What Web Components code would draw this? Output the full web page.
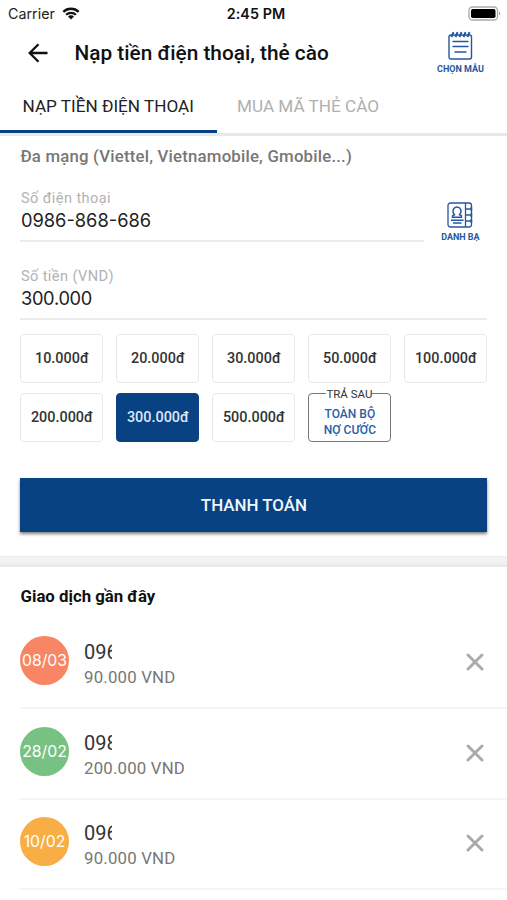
<!DOCTYPE html>
<html lang="vi">
<head>
<meta charset="utf-8">
<meta name="viewport" content="width=device-width, initial-scale=1">
<title>Nạp tiền điện thoại, thẻ cào</title>
<style>
   body {
      margin: 0;
      background: #fff;
      font-family: Roboto, 'Liberation Sans', sans-serif;
      color: #111;
      --blue: #084283;
      --line: #ececec;
      --ui: Inter, 'Liberation Sans', sans-serif;
   }
</style>
</head>
<body>
<topup-screen></topup-screen>

<script>
// Small base class, every element only brings its own markup
class BaseElement extends HTMLElement {
   constructor() {
      super()
      this.attachShadow({ mode: 'open' })
      const template = document.createElement('template')
      template.innerHTML = `<style>*{box-sizing:border-box}</style>` + this.constructor.markup
      this.shadowRoot.appendChild(template.content.cloneNode(true))
   }
}

class StatusBar extends BaseElement {
   static markup = `
   <style>
      :host {
         display: grid;
         grid-template-columns: 1fr auto 1fr;
         align-items: center;
         height: 27px;
         padding: 0 6px 0 8px;
         font: 400 14.3px/27px var(--ui);
         color: #222;
      }
      .left { display: flex; align-items: center; gap: 7px; }
      .time { font-weight: 600; letter-spacing: 0.1px; color: #111; padding-left: 3px; }
      .battery { justify-self: end; }
      svg { display: block; }
   </style>
   <div class="left">
      <span>Carrier</span>
      <svg width="18" height="13" viewBox="0 0 18 13" fill="none" stroke="#111" stroke-width="2.3">
         <path d="M1.3 4.9a11 11 0 0 1 15.4 0M4.1 7.8a7 7 0 0 1 9.8 0"/>
         <path d="M9 12.4 6 9.6a4.2 4.2 0 0 1 6 0z" fill="#111" stroke="none"/>
      </svg>
   </div>
   <span class="time">2:45 PM</span>
   <svg class="battery" width="33" height="15" viewBox="0 0 33 15">
      <rect x="1" y="1" width="28.5" height="13" rx="3.5" fill="#fff" stroke="#aaa" stroke-width="1.3"/>
      <rect x="3" y="3" width="24.5" height="9" rx="1.8" fill="#000"/>
      <path d="M31 5.5c1.3.5 1.3 3.5 0 4z" fill="#888"/>
   </svg>`
}

class IconAction extends BaseElement {
   static markup = `
   <style>
      :host {
         display: flex;
         flex-direction: column;
         align-items: center;
         width: 54px;
         color: #2557a0;
         font-size: 9px;
         line-height: 11px;
         font-weight: 700;
         white-space: nowrap;
      }
      .label { margin-top: 4px; }
   </style>
   <slot name="icon"></slot>
   <span class="label"><slot></slot></span>`
}

class PageHeader extends BaseElement {
   static markup = `
   <style>
      :host {
         display: flex;
         align-items: center;
         height: 52px;
         padding: 0 19.5px 0 27px;
      }
      h1 {
         flex: 1;
         margin: 0 0 0 25.5px;
         font-size: 20.8px;
         line-height: 24px;
         font-weight: 500;
         white-space: nowrap;
      }
      .back { display: block; }
   </style>
   <svg class="back" width="22" height="22" viewBox="0 0 22 22" fill="none" stroke="#111" stroke-width="2.3">
      <path d="M20.5 11H3M11.5 2.2 2.7 11l8.8 8.8"/>
   </svg>
   <h1><slot></slot></h1>
   <slot name="action"></slot>`
}

class TabBar extends BaseElement {
   static markup = `
   <style>
      :host {
         display: flex;
         height: 57px;
         border-bottom: 3px solid #e8e8e8;
      }
   </style>
   <slot></slot>`
}

class TabItem extends BaseElement {
   static markup = `
   <style>
      :host {
         display: block;
         height: 54px;
         padding: 0 20px;
         font-size: 17.15px;
         line-height: 55px;
         color: #b0b0b0;
         white-space: nowrap;
      }
      :host([active]) {
         width: 217px;
         padding: 0 0 0 22.5px;
         color: #222;
         border-bottom: 3.5px solid var(--blue);
      }
   </style>
   <slot></slot>`
}

class FormField extends BaseElement {
   static markup = `
   <style>
      :host {
         display: block;
         height: 54px;
         border-bottom: 2px solid var(--line);
      }
      .label {
         padding-left: 0.5px;
         font-size: 14.6px;
         line-height: 20px;
         letter-spacing: 0.4px;
         color: #b2b2b2;
      }
      .value {
         padding-left: 0.5px;
         font: 400 18.3px/24px var(--ui);
         letter-spacing: var(--value-space, 0);
         color: #222;
      }
   </style>
   <div class="label"><slot name="label"></slot></div>
   <div class="value"><slot></slot></div>`
}

class AmountChip extends BaseElement {
   static markup = `
   <style>
      :host {
         display: flex;
         align-items: center;
         justify-content: center;
         height: 49px;
         border: 1.5px solid #e8e8e8;
         border-radius: 4px;
         font-size: 14.4px;
         font-weight: 500;
         color: #333;
      }
      :host([selected]) {
         background: var(--blue);
         border-color: var(--blue);
         color: #dbe8f7;
      }
   </style>
   <slot></slot>`
}

class PostpaidChip extends BaseElement {
   static markup = `
   <style>
      :host {
         display: flex;
         align-items: center;
         justify-content: center;
         position: relative;
         height: 49px;
         padding-top: 8px;
         border: 1px solid #777;
         border-radius: 4px;
         font-size: 12px;
         line-height: 16px;
         font-weight: 500;
         text-align: center;
         color: #2860a8;
      }
      /* caption sits on the top border */
      .caption {
         position: absolute;
         top: -7px;
         left: 17px;
         right: 18px;
         background: #fff;
         font-size: 11.5px;
         line-height: 15px;
         font-weight: 400;
         color: #333;
         white-space: nowrap;
      }
   </style>
   <span class="caption"><slot name="caption"></slot></span>
   <span><slot></slot></span>`
}

class PayButton extends BaseElement {
   static markup = `
   <style>
      :host { display: block; }
      button {
         display: block;
         width: 100%;
         height: 54px;
         padding: 0;
         border: none;
         background: var(--blue);
         box-shadow: 0 2px 3px rgb(0 0 0 / 0.5);
         color: #f2f7ff;
         font: 500 16.9px/55px Roboto, sans-serif;
      }
   </style>
   <button><slot></slot></button>`
}

class RecentItem extends BaseElement {
   static markup = `
   <style>
      :host {
         display: flex;
         align-items: center;
         height: 90.4px;
         margin-left: 20px;
         padding: 0 23px 5px 0;
         border-bottom: 2px solid #f4f4f4;
      }
      .date {
         width: 49px;
         height: 49px;
         border-radius: 50%;
         background: var(--tone);
         color: #fff;
         font: 400 15.8px/49px var(--ui);
         text-align: center;
         white-space: nowrap;
      }
      .info { flex: 1; margin: 8px 0 0 15px; }
      .phone {
         width: 28px;
         overflow: hidden;
         white-space: nowrap;
         font-size: 20px;
         line-height: 24px;
         color: #333;
      }
      .amount {
         padding-top: 1px;
         font-size: 16.8px;
         line-height: 24px;
         letter-spacing: 0.2px;
         color: #777;
      }
      svg { display: block; margin-top: 3px; }
   </style>
   <div class="date"><slot name="date"></slot></div>
   <div class="info">
      <div class="phone"><slot name="phone"></slot></div>
      <div class="amount"><slot></slot></div>
   </div>
   <svg width="18" height="18" viewBox="0 0 18 18" stroke="#aaa" stroke-width="2.9" stroke-linecap="round">
      <path d="m2 2 14 14M16 2 2 16"/>
   </svg>`
}

class TopupScreen extends BaseElement {
   static markup = `
   <style>
      :host { display: block; height: 900px; overflow: hidden; }
      page-header icon-action { margin-top: -1px; }
      .form { padding: 0 19.6px 0 20.4px; height: 420px; }
      .provider {
         margin: 0;
         padding-top: 10px;
         font-size: 16.8px;
         line-height: 20px;
         font-weight: 500;
         letter-spacing: 0.2px;
         color: #777;
         white-space: nowrap;
      }
      .phone-row {
         display: flex;
         justify-content: space-between;
         align-items: flex-start;
         height: 76px;
         padding-top: 22px;
      }
      .phone-row form-field { width: 404px; }
      .phone-row icon-action { margin: 14px 0 0; }
      .money { margin-top: 24px; --value-space: -0.3px; }
      .amounts {
         display: grid;
         grid-template-columns: repeat(5, 1fr);
         gap: 10px 13px;
         margin-top: 14px;
      }
      pay-button { margin-top: 36px; }
      .band { height: 11px; background: #f2f2f2; border: solid #ebebeb; border-width: 1px 0 3px; }
      h2 {
         margin: 0;
         padding: 19px 20.5px 0;
         font-size: 16.8px;
         line-height: 20px;
         height: 52px;
         font-weight: 700;
      }
      svg { display: block; }
   </style>
   <status-bar></status-bar>
   <page-header>
      Nạp tiền điện thoại, thẻ cào
      <icon-action slot="action">
         <svg slot="icon" width="25" height="29" viewBox="0 0 25 29" fill="none" stroke="#2557a0" stroke-width="1.4">
            <rect x="1" y="4" width="22.5" height="24" rx="2"/>
            <path d="M5 10.5h15M7.5 15.5h10.5M5 15.5h15M7 21h11" stroke-linecap="round"/>
            <path d="m3.5 6 2-4.8M7.5 6l2-4.8M11.5 6l2-4.8M15.5 6l2-4.8M19.5 6l2-4.8" stroke-width="2"/>
         </svg>
         CHỌN MẪU
      </icon-action>
   </page-header>
   <tab-bar>
      <tab-item active>NẠP TIỀN ĐIỆN THOẠI</tab-item>
      <tab-item>MUA MÃ THẺ CÀO</tab-item>
   </tab-bar>
   <section class="form">
      <p class="provider">Đa mạng (Viettel, Vietnamobile, Gmobile...)</p>
      <div class="phone-row">
         <form-field><span slot="label">Số điện thoại</span>0986-868-686</form-field>
         <icon-action>
            <svg slot="icon" width="26" height="26" viewBox="0 0 26 26" fill="none" stroke="#2557a0" stroke-width="1.3">
               <rect x="1" y="1" width="23.5" height="24" rx="2.5"/>
               <path d="M18.5 1v24M18.5 7h6M18.5 13h6M18.5 19h6"/>
               <path d="M23 6h2.4M23 8h2.4M23 12h2.4M23 14h2.4M23 18h2.4M23 20h2.4" stroke-width="1"/>
               <path d="M5.5 15.2v-1.4l2-1c-1.4-1.6-1.9-3.9-1-5.7 1.3-2.8 5.7-2.8 7 0 .9 1.8.4 4.1-1 5.7l2 1v1.4z" stroke-width="1.4"/>
               <path d="M4 18.2h12.5M6 21h8.5" stroke-width="1.4"/>
            </svg>
            DANH BẠ
         </icon-action>
      </div>
      <form-field class="money"><span slot="label">Số tiền (VND)</span>300.000</form-field>
      <div class="amounts">
         <amount-chip>10.000đ</amount-chip>
         <amount-chip>20.000đ</amount-chip>
         <amount-chip>30.000đ</amount-chip>
         <amount-chip>50.000đ</amount-chip>
         <amount-chip>100.000đ</amount-chip>
         <amount-chip>200.000đ</amount-chip>
         <amount-chip selected>300.000đ</amount-chip>
         <amount-chip>500.000đ</amount-chip>
         <postpaid-chip><span slot="caption">TRẢ SAU</span>TOÀN BỘ<br>NỢ CƯỚC</postpaid-chip>
      </div>
      <pay-button>THANH TOÁN</pay-button>
   </section>
   <div class="band"></div>
   <h2>Giao dịch gần đây</h2>
   <recent-item style="--tone: #f88563"><span slot="date">08/03</span><span slot="phone">096</span>90.000 VND</recent-item>
   <recent-item style="--tone: #77c283"><span slot="date">28/02</span><span slot="phone">098</span>200.000 VND</recent-item>
   <recent-item style="--tone: #f8ae45"><span slot="date">10/02</span><span slot="phone">096</span>90.000 VND</recent-item>`
}

// Register the elements
function register() {
   const elements = {
      'status-bar': StatusBar,
      'icon-action': IconAction,
      'page-header': PageHeader,
      'tab-bar': TabBar,
      'tab-item': TabItem,
      'form-field': FormField,
      'amount-chip': AmountChip,
      'postpaid-chip': PostpaidChip,
      'pay-button': PayButton,
      'recent-item': RecentItem,
      'topup-screen': TopupScreen
   }
   Object.entries(elements).forEach(([name, cls]) => window.customElements.define(name, cls))
}

register()
</script>
</body>
</html>
